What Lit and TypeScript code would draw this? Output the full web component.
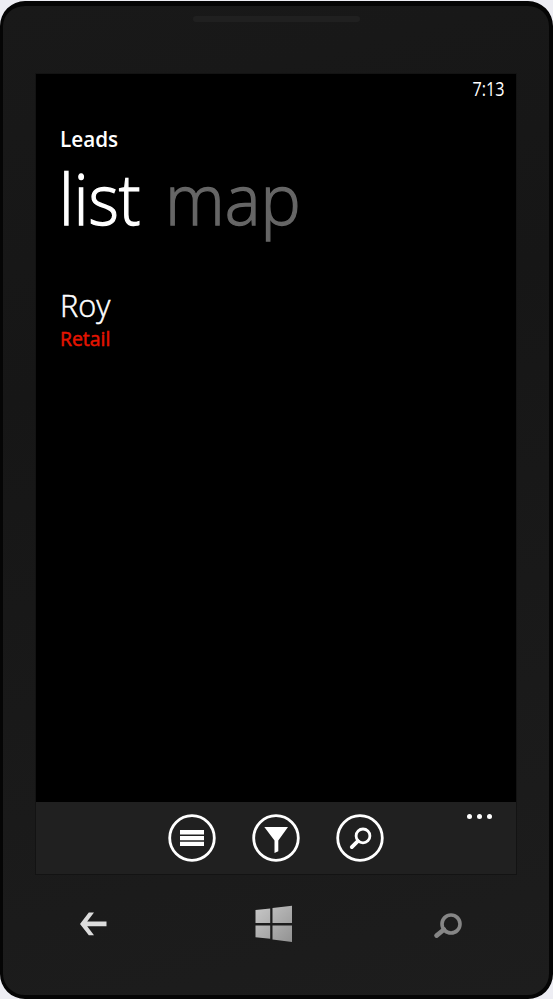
import { LitElement, html, css, svg } from "lit";
import { customElement } from "lit/decorators.js";

const icons = {
  list: svg`<path d="M12 16h24v4.4H12zM12 21.9h24v4.4H12zM12 27.8h24v4.2H12z" fill="#fff"/>`,
  filter: svg`<path d="M12.3 13H36L26.3 26.5V37.2L22.5 39V26.5Z" fill="#fff"/>`,
  search: svg`<g fill="none" stroke="#fff"><circle cx="27" cy="21.9" r="6.9" stroke-width="2.8"/><path d="M21.8 27.1L15.8 33.1" stroke-width="3.8" stroke-linecap="round"/></g>`,
};

@customElement("app-root")
export class AppRoot extends LitElement {
  static styles = css`
    :host {
      display: block;
      width: 553px;
      height: 999px;
      overflow: hidden;
      background: #ededf3;
      font-family: "Open Sans", "Noto Sans", sans-serif;
    }
    .phone {
      box-sizing: border-box;
      height: 998px;
      margin-top: 1px;
      border: solid #050505;
      border-width: 5px 4px 4px 3px;
      border-radius: 25px;
      background: linear-gradient(165deg, #191919 0%, #161616 35%, #1d1d1d 100%);
      display: flex;
      flex-direction: column;
    }
    .top {
      height: 68px;
      display: flex;
      justify-content: center;
    }
    .speaker {
      width: 167px;
      height: 6px;
      margin: 10px 0 0 1px;
      border-radius: 3px;
      background: #202020;
    }
    .screen {
      width: 480px;
      height: 800px;
      margin-left: 33px;
      background: #000;
      color: #fff;
      display: flex;
      flex-direction: column;
      outline: 1px solid #131313;
    }
    .status {
      display: flex;
      justify-content: flex-end;
      height: 27px;
      padding: 1px 11px 0 0;
      font-size: 19.5px;
      line-height: 28px;
    }
    .time {
      transform: scaleX(0.83);
      transform-origin: right;
    }
    .content {
      flex: 1;
      padding: 21px 0 0 24px;
    }
    .app {
      width: max-content;
      font-size: 22px;
      line-height: 30px;
      font-weight: 600;
      transform: scaleX(0.94);
      transform-origin: left;
    }
    .tabs {
      display: flex;
      height: 90px;
      font-size: 70px;
      line-height: 90px;
      font-weight: 300;
    }
    .tab {
      width: 106px;
      margin-left: -1px;
      white-space: nowrap;
      transform: scaleX(0.93);
      transform-origin: left;
      -webkit-text-stroke: 1.3px currentColor;
    }
    .off {
      color: #666;
      margin-left: 0;
      transform: scaleX(0.965);
    }
    .name {
      width: max-content;
      margin-top: 42px;
      font-size: 32px;
      line-height: 40px;
      font-weight: 300;
      transform: scaleX(0.96);
      transform-origin: left;
      -webkit-text-stroke: 0.5px currentColor;
    }
    .kind {
      width: max-content;
      font-size: 20px;
      line-height: 28px;
      font-weight: 400;
      color: #e51400;
      transform: scaleX(0.97);
      transform-origin: left;
      -webkit-text-stroke: 0.5px currentColor;
    }
    .bar {
      height: 72px;
      background: #202020;
      display: grid;
      grid-template-columns: 1fr auto 1fr;
    }
    .actions {
      grid-column: 2;
      display: flex;
      gap: 36px;
      padding-top: 12px;
    }
    .actions svg {
      width: 48px;
      height: 48px;
    }
    .more {
      display: flex;
      justify-content: flex-end;
      gap: 5px;
      padding: 12px 24px 0 0;
    }
    .dot {
      width: 5px;
      height: 5px;
      border-radius: 50%;
      background: #fff;
    }
    .keys {
      flex: 1;
      display: flex;
      justify-content: space-between;
      padding: 28px 85px 0 74px;
    }
    svg {
      display: block;
    }
  `;

  private action(icon: unknown) {
    return html`<svg viewBox="0 0 48 48">
      <circle cx="24" cy="24" r="22.3" fill="none" stroke="#fff" stroke-width="2.8" />${icon}
    </svg>`;
  }

  render() {
    return html`<div class="phone">
      <div class="top"><div class="speaker"></div></div>
      <div class="screen">
        <div class="status"><span class="time">7:13</span></div>
        <div class="content">
          <div class="app">Leads</div>
          <div class="tabs"><span class="tab">list</span><span class="tab off">map</span></div>
          <div class="name">Roy</div>
          <div class="kind">Retail</div>
        </div>
        <div class="bar">
          <div class="actions">
            ${this.action(icons.list)}${this.action(icons.filter)}${this.action(icons.search)}
          </div>
          <div class="more"><i class="dot"></i><i class="dot"></i><i class="dot"></i></div>
        </div>
      </div>
      <div class="keys">
        <svg width="34" height="44" viewBox="0 0 34 44">
          <path d="M3 22L11.8 10.5H17L10.2 19.6H29.5V24.2H10.2L17 33.3H11.8Z" fill="#dcdcdc" />
        </svg>
        <svg width="42" height="44" viewBox="-1.5 -0.8 42 44">
          <defs>
            <linearGradient id="win" x1="0" y1="0" x2="1" y2="1">
              <stop offset="0" stop-color="#c8c8c8" />
              <stop offset="1" stop-color="#929292" />
            </linearGradient>
          </defs>
          <path
            d="M3 7.2L17.7 5.6V20.3H3ZM20 5.3L39.5 3V20.3H20ZM3 22.7H17.7V36L3 34.5ZM20 22.7H39.5V39.2L20 36.6Z"
            fill="url(#win)"
          />
        </svg>
        <svg width="32" height="44" viewBox="0 0 32 44">
          <g fill="none" stroke="#868686">
            <circle cx="19" cy="22" r="9" stroke-width="3.6" />
            <path d="M12 27.5L4.5 33.6" stroke-width="4.6" stroke-linecap="round" />
          </g>
        </svg>
      </div>
    </div>`;
  }
}
